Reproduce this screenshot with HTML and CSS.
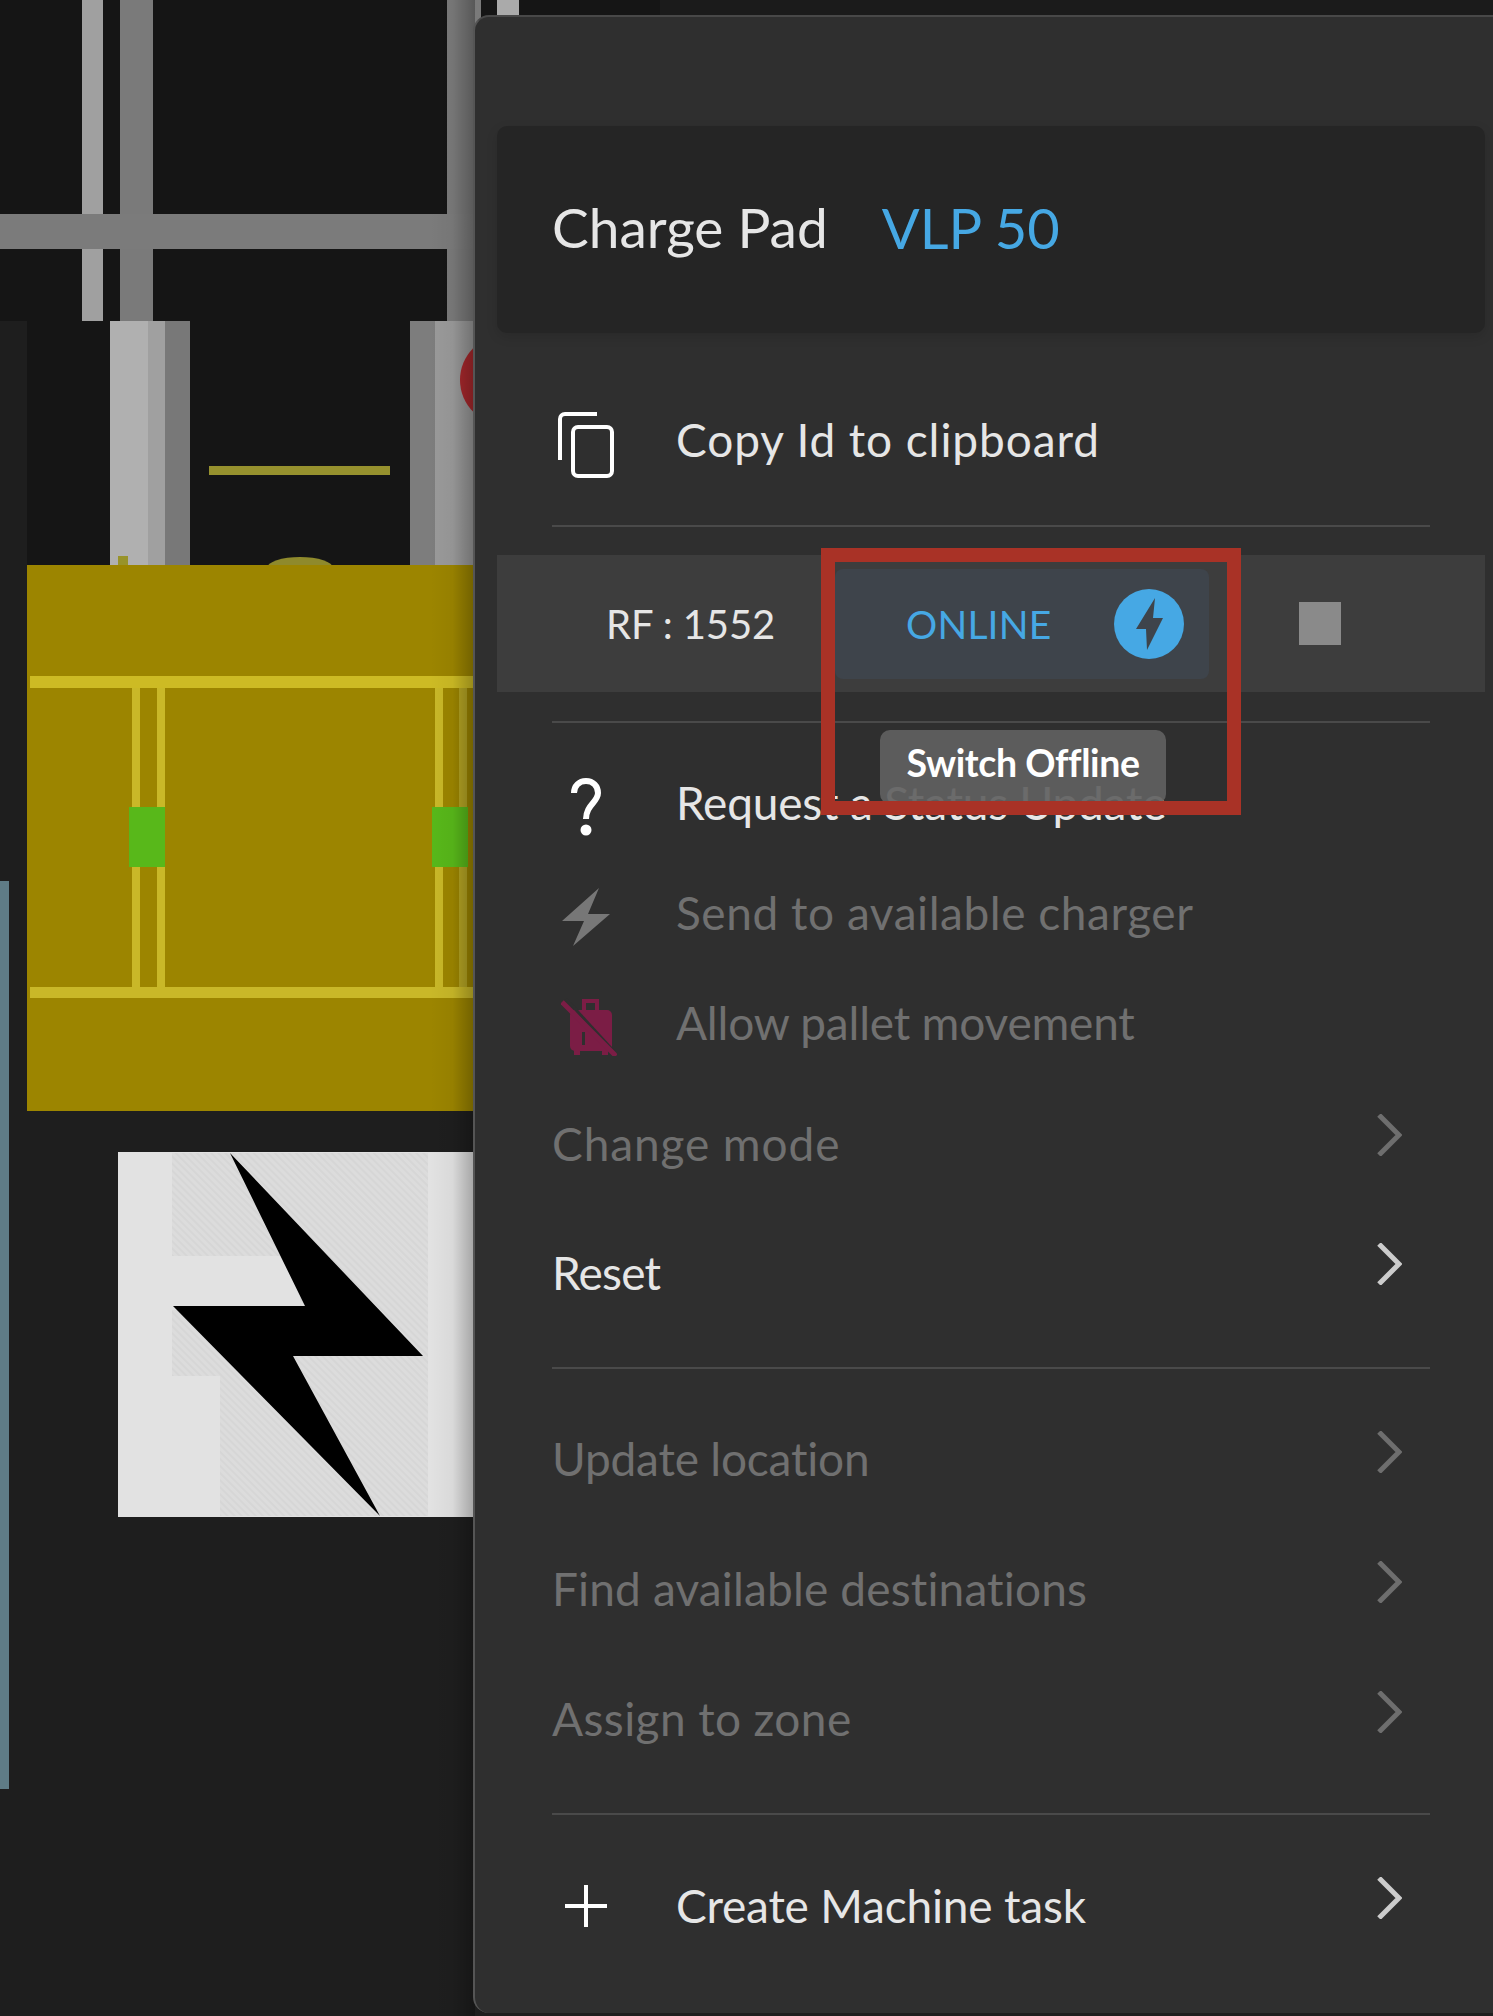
FILE: index.html
```html
<!DOCTYPE html>
<html lang="en">
<head>
    <meta charset="UTF-8">
    <meta name="viewport" content="width=device-width, initial-scale=1.0">
    <link rel="stylesheet" href="styles.css">
    <title>Charge Pad VLP 50</title>
</head>
<body>
    <div class="page">
        <!-- machine layout canvas -->
        <svg class="layout" viewBox="0 0 1493 2016" width="1493" height="2016">
            <defs>
                <linearGradient id="panel-shade" x1="0" y1="0" x2="1" y2="0">
                    <stop offset="0" stop-color="#000000" stop-opacity="0"/>
                    <stop offset="0.5" stop-color="#000000" stop-opacity="0.04"/>
                    <stop offset="1" stop-color="#000000" stop-opacity="0.28"/>
                </linearGradient>
                <pattern id="sign-hatch" width="5" height="5" patternUnits="userSpaceOnUse" patternTransform="rotate(45)">
                    <rect width="5" height="5" fill="#dcdcdc"/>
                    <rect width="5" height="2" fill="#d6d6d6"/>
                </pattern>
            </defs>
            <rect x="0" y="0" width="1493" height="321" fill="#151515"/>
            <rect x="660" y="0" width="833" height="15" fill="#1b1b1b"/>
            <rect x="27" y="321" width="450" height="245" fill="#151515"/>
            <rect x="82" y="0" width="21" height="321" fill="#a0a0a0"/>
            <rect x="120" y="0" width="33" height="321" fill="#7a7a7a"/>
            <rect x="447" y="0" width="34" height="321" fill="#7a7a7a"/>
            <rect x="497" y="0" width="22" height="15" fill="#aaaaaa"/>
            <rect x="0" y="214" width="480" height="35" fill="#7b7b7b"/>
            <rect x="110" y="321" width="38" height="245" fill="#b0b0b0"/>
            <rect x="148" y="321" width="17" height="245" fill="#a0a0a0"/>
            <rect x="165" y="321" width="25" height="245" fill="#787878"/>
            <rect x="410" y="321" width="25" height="245" fill="#7d7d7d"/>
            <rect x="435" y="321" width="42" height="245" fill="#9a9a9a"/>
            <circle cx="505" cy="380" r="45" fill="#a8282c"/>
            <rect x="209" y="466" width="181" height="9" fill="#96912e"/>
            <rect x="118" y="556" width="10" height="10" fill="#98932a"/>
            <ellipse cx="300" cy="568" rx="33" ry="11" fill="#8f8a2c"/>
            <rect x="27" y="565" width="450" height="546" fill="#9c8500"/>
            <rect x="30" y="676" width="447" height="12" fill="#cdbb24"/>
            <rect x="30" y="987" width="447" height="11" fill="#c9b828"/>
            <rect x="132" y="688" width="8" height="299" fill="#c9b828"/>
            <rect x="157" y="688" width="8" height="299" fill="#c9b828"/>
            <rect x="435" y="688" width="8" height="299" fill="#c9b828"/>
            <rect x="459" y="688" width="8" height="299" fill="#b3a323"/>
            <rect x="129" y="807" width="36" height="60" fill="#58b81a"/>
            <rect x="432" y="807" width="36" height="60" fill="#58b81a"/>
            <rect x="118" y="1152" width="359" height="365" fill="#e2e2e2"/>
            <polygon points="172,1153 428,1153 428,1516 220,1516 220,1376 172,1376 172,1310 300,1310 300,1256 172,1256" fill="url(#sign-hatch)"/>
            <polygon points="230,1153 423,1356 293,1356 380,1516 173,1306 305,1306" fill="#000000"/>
            <rect x="0" y="881" width="9" height="908" fill="#5f7c86"/>
            <rect x="430" y="0" width="45" height="2016" fill="url(#panel-shade)"/>
        </svg>

        <aside class="panel">
            <header class="panel-head">
                <span class="panel-type">Charge Pad</span>
                <span class="panel-name">VLP 50</span>
            </header>

            <div class="menu-row copy-row">
                <svg class="icon copy-icon" width="56" height="66" viewBox="0 0 56 66" fill="none" stroke="#ffffff" stroke-width="4">
                    <rect x="15" y="15" width="39" height="49" rx="5"/>
                    <path d="M2 48V7a5 5 0 0 1 5-5H39"/>
                </svg>
                <span class="spread-4">Copy Id to clipboard</span>
            </div>

            <div class="rf-row">
                <span class="rf-label">RF : 1552</span>
                <div class="status-pill">
                    <span class="status-text">ONLINE</span>
                    <svg class="status-icon" width="70" height="70" viewBox="0 0 70 70">
                        <circle cx="35" cy="35" r="35" fill="#46a8e4"/>
                        <polygon points="41,9 22,40 32,40 33,61 49,29 39,29" fill="#3e444b"/>
                    </svg>
                    <div class="tooltip">Switch Offline</div>
                    <div class="highlight"></div>
                </div>
                <span class="stop-box"></span>
            </div>

            <div class="action-list">
                <div class="menu-row action-row">
                    <svg class="icon" width="56" height="58" viewBox="0 0 56 58" fill="none" stroke="#ffffff" stroke-width="6">
                        <path d="M16 15C16 8 21 3 28 3C35 3 40 8 40 15C40 24 28 27 28 41"/>
                        <circle cx="28" cy="52" r="5.5" fill="#ffffff" stroke="none"/>
                    </svg>
                    <span class="row-text">Request a Status Update</span>
                </div>
                <div class="menu-row action-row is-disabled">
                    <svg class="icon" width="56" height="58" viewBox="0 0 56 58">
                        <polygon points="41,0 4,33 26,33 15,58 52,26 30,26" fill="#777777"/>
                    </svg>
                    <span class="row-text spread-3">Send to available charger</span>
                </div>
                <div class="menu-row action-row is-disabled">
                    <svg class="icon luggage-icon" width="56" height="58" viewBox="0 0 56 58">
                        <path d="M23 13V3h13v10" fill="none" stroke="#7b1d45" stroke-width="4"/>
                        <rect x="9" y="12" width="42" height="41" rx="5" fill="#7b1d45"/>
                        <rect x="13" y="52" width="6" height="5" fill="#7b1d45"/>
                        <rect x="41" y="52" width="6" height="5" fill="#7b1d45"/>
                        <rect x="21" y="34" width="3" height="13" fill="#2f2f2f"/>
                        <path d="M5 1L59 60" stroke="#2f2f2f" stroke-width="3"/>
                        <path d="M1 4L55 58" stroke="#7b1d45" stroke-width="5"/>
                    </svg>
                    <span class="row-text">Allow pallet movement</span>
                </div>
            </div>

            <div class="submenu-group first-group">
                <div class="sub-row is-disabled">
                    <span class="row-text spread-4">Change mode</span>
                    <svg class="chevron" width="26" height="42" viewBox="0 0 26 42"><path d="M3 1L23 21L3 41"/></svg>
                </div>
                <div class="sub-row">
                    <span class="row-text tight">Reset</span>
                    <svg class="chevron" width="26" height="42" viewBox="0 0 26 42"><path d="M3 1L23 21L3 41"/></svg>
                </div>
            </div>

            <div class="submenu-group second-group">
                <div class="sub-row is-disabled">
                    <span class="row-text">Update location</span>
                    <svg class="chevron" width="26" height="42" viewBox="0 0 26 42"><path d="M3 1L23 21L3 41"/></svg>
                </div>
                <div class="sub-row is-disabled">
                    <span class="row-text spread-1">Find available destinations</span>
                    <svg class="chevron" width="26" height="42" viewBox="0 0 26 42"><path d="M3 1L23 21L3 41"/></svg>
                </div>
                <div class="sub-row is-disabled">
                    <span class="row-text spread-2">Assign to zone</span>
                    <svg class="chevron" width="26" height="42" viewBox="0 0 26 42"><path d="M3 1L23 21L3 41"/></svg>
                </div>
            </div>

            <div class="sub-row create-row">
                <span class="create-label">
                    <svg class="icon" width="56" height="42" viewBox="0 0 56 42" fill="none" stroke="#ffffff" stroke-width="4">
                        <path d="M28 0V42M7 21H49"/>
                    </svg>
                    <span class="row-text">Create Machine task</span>
                </span>
                <svg class="chevron" width="26" height="42" viewBox="0 0 26 42"><path d="M3 1L23 21L3 41"/></svg>
            </div>
        </aside>
    </div>
</body>
</html>
```

FILE: styles.css
```css
body {
    margin: 0;
    background-color: #1e1e1e;
    font-family: "Lato", "Liberation Sans", sans-serif;
    overflow: hidden;
}

.page {
    position: relative;
    width: 1493px;
    height: 2016px;
    overflow: hidden;
}

.layout {
    position: absolute;
    top: 0;
    left: 0;
}

.panel {
    position: absolute;
    top: 15px;
    left: 473px;
    width: 1020px;
    height: 1998px;
    padding: 109px 8px 0 22px;
    box-sizing: border-box;
    background-color: #2f2f2f;
    border-left: 2px solid #555555;
    border-top: 2px solid #484848;
    border-radius: 16px 0 0 16px;
    color: #e6e6e6;
    font-size: 46px;
    letter-spacing: -0.2px;
}

.spread-1 {
    letter-spacing: 0.15px;
}

.spread-2 {
    letter-spacing: 0.4px;
}

.spread-3 {
    letter-spacing: 0.55px;
}

.spread-4 {
    letter-spacing: 0.9px;
}

.tight {
    letter-spacing: -0.8px;
}

.panel-head {
    display: flex;
    align-items: center;
    gap: 54px;
    height: 207px;
    box-sizing: border-box;
    padding: 0 0 5px 55px;
    background-color: #252525;
    border-radius: 10px;
    box-shadow: 0 4px 12px rgba(0, 0, 0, 0.12);
    font-size: 55px;
    letter-spacing: 0;
}

.panel-name {
    color: #46a8e4;
    font-size: 56px;
}

.menu-row {
    display: flex;
    align-items: center;
    gap: 62px;
    margin: 0 55px;
}

.copy-row {
    height: 194px;
    box-sizing: border-box;
    padding-top: 20px;
    border-bottom: 2px solid #4a4a4a;
}

.icon {
    flex: none;
    margin-left: 6px;
}

.copy-icon {
    margin-top: 12px;
}

.rf-row {
    display: flex;
    align-items: center;
    height: 137px;
    margin-top: 28px;
    padding-left: 109px;
    background-color: #3d3d3d;
    font-size: 40px;
    letter-spacing: -0.1px;
}

.rf-label {
    width: 229px;
}

.status-pill {
    position: relative;
    display: flex;
    align-items: center;
    justify-content: space-between;
    width: 374px;
    height: 110px;
    padding: 0 25px 0 71px;
    box-sizing: border-box;
    background-color: #3e444b;
    border-radius: 8px;
    color: #46a8e4;
}

.status-text {
    font-size: 39px;
    letter-spacing: 0.2px;
}

.tooltip {
    position: absolute;
    top: 161px;
    left: 45px;
    width: 286px;
    height: 74px;
    box-sizing: border-box;
    padding-top: 10px;
    background-color: rgba(97, 97, 97, 0.92);
    border-radius: 10px;
    color: #ffffff;
    font-size: 37.5px;
    font-weight: 700;
    letter-spacing: -0.4px;
    text-align: center;
    z-index: 2;
}

.highlight {
    position: absolute;
    top: -21px;
    left: -14px;
    width: 420px;
    height: 267px;
    box-sizing: border-box;
    border: 14px solid #a93226;
    z-index: 3;
}

.stop-box {
    width: 42px;
    height: 43px;
    margin-left: 90px;
    background-color: #8a8a8a;
}

.action-list {
    margin: 29px 55px 0;
    padding-top: 27px;
    box-shadow: inset 0 2px 0 #4a4a4a;
}

.action-row {
    height: 110px;
    margin: 0;
}

.action-row .row-text {
    padding-bottom: 2px;
}

.action-row .icon {
    margin-top: 8px;
}

.action-row .luggage-icon {
    margin-left: 9px;
    margin-right: -3px;
}

.is-disabled {
    color: #707070;
}

.submenu-group {
    margin: 0 55px;
    padding-bottom: 31px;
    border-bottom: 2px solid #4a4a4a;
}

.sub-row {
    display: flex;
    align-items: center;
    justify-content: space-between;
    height: 129px;
}

.first-group .row-text {
    padding-top: 2px;
}

.second-group {
    padding-top: 26px;
    padding-bottom: 28px;
}

.second-group .sub-row {
    height: 130px;
}

.second-group .row-text {
    padding-bottom: 3px;
}

.create-row {
    height: 130px;
    margin: 26px 55px 0;
}

.create-label {
    display: flex;
    align-items: center;
    gap: 62px;
}

.create-label .row-text {
    padding-bottom: 2px;
}

.chevron {
    margin: -16px 28px 0 0;
    fill: none;
    stroke: #cccccc;
    stroke-width: 5;
}

.is-disabled .chevron {
    stroke: #6e6e6e;
}
```
